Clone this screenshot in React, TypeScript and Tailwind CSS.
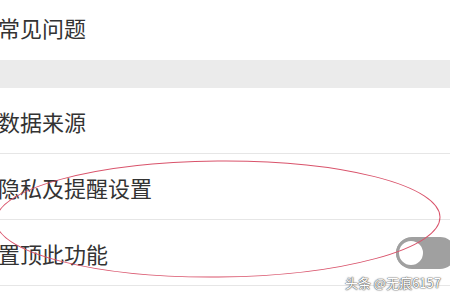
import React from "react";

const font = { fontFamily: '"Noto Sans CJK SC", "Noto Sans", sans-serif' };

function Row({ label, right, first }: { label: string; right?: React.ReactNode; first?: boolean }) {
  return (
    <div
      className={`flex items-center justify-between h-[66px] border-b border-[#e6e6e6] ${first ? "" : ""}`}
    >
      <span className="-ml-[2px] text-[22px] leading-none text-[#333333]">{label}</span>
      {right}
    </div>
  );
}

function Toggle() {
  return (
    <div className="relative w-[60px] h-[32px] rounded-full bg-[#a0a0a0] shrink-0 -mr-[6px]">
      <div className="absolute left-0 top-[1px] w-[30px] h-[30px] rounded-full bg-white border-[3px] border-[#a0a0a0]" />
    </div>
  );
}

export default function App() {
  return (
    <div className="relative w-[450px] h-[300px] overflow-hidden bg-white" style={font}>
      <div className="-mt-[6px]">
        <div className="flex items-center h-[66px]">
          <span className="-ml-[2px] text-[22px] leading-none text-[#333333]">常见问题</span>
        </div>
        <div className="h-[28px] bg-[#ebebeb]" />
        <Row label="数据来源" />
        <Row label="隐私及提醒设置" />
        <div className="flex items-center justify-between h-[66px] border-b border-[#e6e6e6]">
          <span className="-ml-[2px] text-[22px] leading-none text-[#333333]">置顶此功能</span>
          <Toggle />
        </div>
      </div>

      <svg className="absolute inset-0 pointer-events-none" width="450" height="300" viewBox="0 0 450 300">
        <ellipse
          cx="218"
          cy="219"
          rx="222"
          ry="58"
          fill="none"
          stroke="#d9536b"
          strokeWidth="1"
          transform="rotate(-0.5 218 219)"
        />
      </svg>

      <div
        className="absolute right-[9px] top-[276px] text-[13px] leading-none text-white"
        style={{
          textShadow:
            "0 0 1px #555, 0 0 1px #555, 0 0 2px #777",
          fontFamily: '"Noto Sans CJK SC", "Noto Sans", sans-serif',
        }}
      >
        头条 @无痕6157
      </div>
    </div>
  );
}
